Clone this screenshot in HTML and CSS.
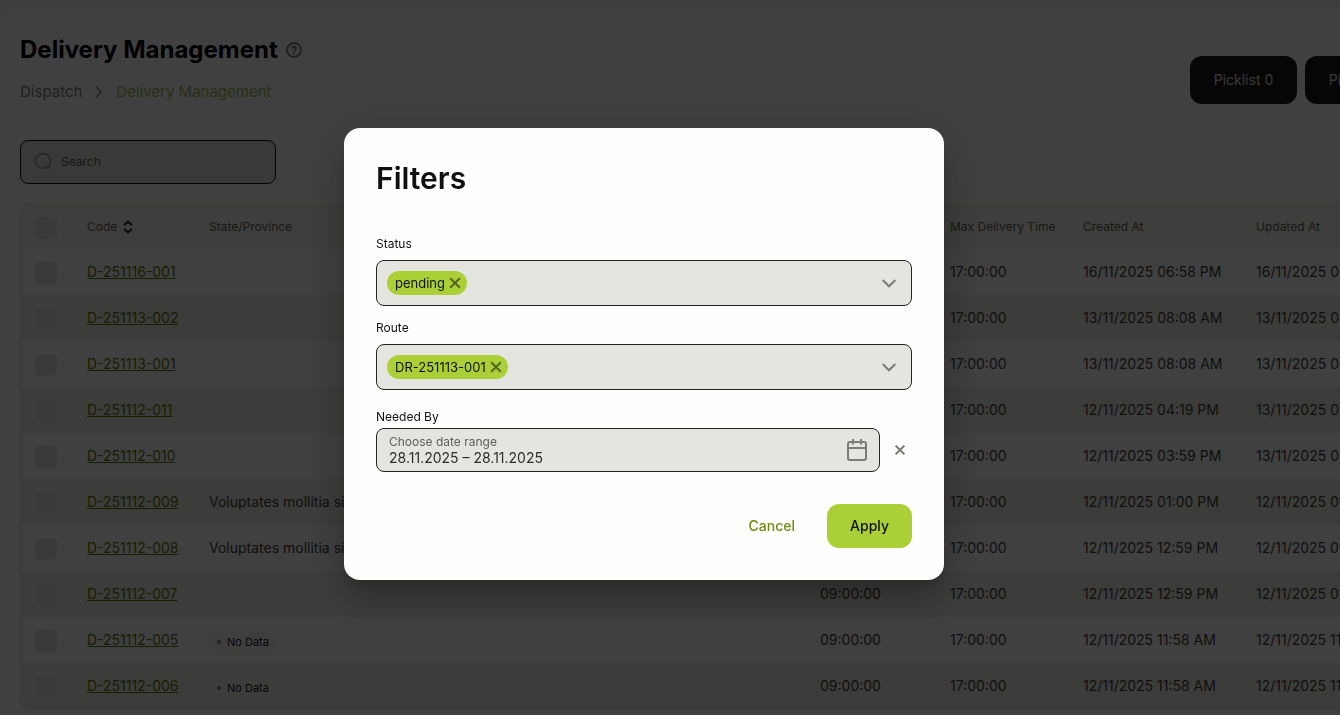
FILE: index.html
```
<!DOCTYPE html>
<html lang="en">
<head>
<meta charset="utf-8">
<title>Delivery Management</title>
<link rel="stylesheet" href="styles.css">
</head>
<body>
<main class="page">
  <header class="page-head">
    <div class="heading">
      <div class="title-row">
        <h1 class="title">Delivery Management</h1>
        <button class="icon-btn help" type="button" aria-label="Help">
          <svg width="16" height="16" viewBox="0 0 16 16" fill="none" stroke="currentColor" stroke-width="1.8"><circle cx="8" cy="8" r="7"/><path d="M6 6.600a2 2 0 1 1 2.900 1.700c-.6.300-.9.600-.9 1.200" /><path d="M8 10.600v1.600"/></svg>
        </button>
      </div>
      <nav class="crumbs" aria-label="Breadcrumb">
        <a class="crumb" href="#">Dispatch</a>
        <svg class="crumb-sep" width="8" height="12" viewBox="0 0 8 12" fill="none" stroke="currentColor" stroke-width="1.6"><path d="M1.200 1l5 5-5 5"/></svg>
        <a class="crumb crumb-current" href="#">Delivery Management</a>
      </nav>
    </div>
    <div class="actions">
      <button class="dark-btn" type="button">Picklist 0</button>
      <button class="dark-btn" type="button">Picklist 0</button>
    </div>
  </header>

  <div class="search">
    <svg width="18" height="18" viewBox="0 0 18 18" fill="none" stroke="currentColor" stroke-width="1.1"><circle cx="8" cy="8" r="7.400"/><path d="M14.200 14.200l1.600 1.600" stroke-width="1.400"/></svg>
    <input class="search-input" type="text" placeholder="Search" aria-label="Search">
  </div>

  <div class="table-wrap">
    <table class="table">
      <colgroup><col class="c-check"><col class="c-code"><col class="c-state"><col class="c-min"><col class="c-max"><col class="c-date"><col class="c-date"></colgroup>
      <thead>
        <tr>
          <th><input class="check" type="checkbox" aria-label="Select all"></th>
          <th><span class="sort">Code <svg width="10" height="14" viewBox="0 0 10 14" fill="none" stroke="currentColor" stroke-width="2"><path d="M1.200 5L5 1.600 8.800 5M1.200 9L5 12.400 8.800 9"/></svg></span></th>
          <th>State/Province</th><th></th><th>Max Delivery Time</th><th>Created At</th><th>Updated At</th>
        </tr>
      </thead>
      <tbody>
        <tr><td><input class="check" type="checkbox" aria-label="Select D-251116-001"></td><td><a class="code" href="#">D-251116-001</a></td><td></td><td></td><td>17:00:00</td><td>16/11/2025 06:58 PM</td><td>16/11/2025 06:58 PM</td></tr>
        <tr><td><input class="check" type="checkbox" aria-label="Select D-251113-002"></td><td><a class="code" href="#">D-251113-002</a></td><td></td><td></td><td>17:00:00</td><td>13/11/2025 08:08 AM</td><td>13/11/2025 08:08 AM</td></tr>
        <tr><td><input class="check" type="checkbox" aria-label="Select D-251113-001"></td><td><a class="code" href="#">D-251113-001</a></td><td></td><td></td><td>17:00:00</td><td>13/11/2025 08:08 AM</td><td>13/11/2025 08:08 AM</td></tr>
        <tr><td><input class="check" type="checkbox" aria-label="Select D-251112-011"></td><td><a class="code" href="#">D-251112-011</a></td><td></td><td></td><td>17:00:00</td><td>12/11/2025 04:19 PM</td><td>13/11/2025 08:08 AM</td></tr>
        <tr><td><input class="check" type="checkbox" aria-label="Select D-251112-010"></td><td><a class="code" href="#">D-251112-010</a></td><td></td><td></td><td>17:00:00</td><td>12/11/2025 03:59 PM</td><td>13/11/2025 08:08 AM</td></tr>
        <tr><td><input class="check" type="checkbox" aria-label="Select D-251112-009"></td><td><a class="code" href="#">D-251112-009</a></td><td>Voluptates mollitia sint</td><td></td><td>17:00:00</td><td>12/11/2025 01:00 PM</td><td>12/11/2025 01:00 PM</td></tr>
        <tr><td><input class="check" type="checkbox" aria-label="Select D-251112-008"></td><td><a class="code" href="#">D-251112-008</a></td><td>Voluptates mollitia sint</td><td></td><td>17:00:00</td><td>12/11/2025 12:59 PM</td><td>12/11/2025 01:00 PM</td></tr>
        <tr><td><input class="check" type="checkbox" aria-label="Select D-251112-007"></td><td><a class="code" href="#">D-251112-007</a></td><td></td><td>09:00:00</td><td>17:00:00</td><td>12/11/2025 12:59 PM</td><td>12/11/2025 01:00 PM</td></tr>
        <tr><td><input class="check" type="checkbox" aria-label="Select D-251112-005"></td><td><a class="code" href="#">D-251112-005</a></td><td><span class="badge">No Data</span></td><td>09:00:00</td><td>17:00:00</td><td>12/11/2025 11:58 AM</td><td>12/11/2025 11:58 AM</td></tr>
        <tr><td><input class="check" type="checkbox" aria-label="Select D-251112-006"></td><td><a class="code" href="#">D-251112-006</a></td><td><span class="badge">No Data</span></td><td>09:00:00</td><td>17:00:00</td><td>12/11/2025 11:58 AM</td><td>12/11/2025 11:58 AM</td></tr>
      </tbody>
    </table>
  </div>
</main>

<div class="overlay">
  <dialog class="modal" open aria-labelledby="filters-title">
    <h2 class="modal-title" id="filters-title">Filters</h2>
    <form class="form">
      <div class="field">
        <label class="label" for="status">Status</label>
        <div class="combo">
          <span class="chip">pending<button class="icon-btn chip-x" type="button" aria-label="Remove pending"><svg width="12" height="12" viewBox="0 0 12 12" fill="none" stroke="currentColor" stroke-width="2"><path d="M1.200 1.200l9.600 9.600M10.800 1.200l-9.600 9.600"/></svg></button></span>
          <input class="combo-input" id="status" type="text" role="combobox" aria-expanded="false">
          <button class="icon-btn" type="button" aria-label="Open status list"><svg width="14" height="9" viewBox="0 0 14 9" fill="none" stroke="currentColor" stroke-width="2"><path d="M.7 1L7 7.300 13.300 1"/></svg></button>
        </div>
      </div>
      <div class="field">
        <label class="label" for="route">Route</label>
        <div class="combo">
          <span class="chip">DR-251113-001<button class="icon-btn chip-x" type="button" aria-label="Remove DR-251113-001"><svg width="12" height="12" viewBox="0 0 12 12" fill="none" stroke="currentColor" stroke-width="2"><path d="M1.200 1.200l9.600 9.600M10.800 1.200l-9.600 9.600"/></svg></button></span>
          <input class="combo-input" id="route" type="text" role="combobox" aria-expanded="false">
          <button class="icon-btn" type="button" aria-label="Open route list"><svg width="14" height="9" viewBox="0 0 14 9" fill="none" stroke="currentColor" stroke-width="2"><path d="M.7 1L7 7.300 13.300 1"/></svg></button>
        </div>
      </div>
      <div class="field field-date">
        <span class="label">Needed By</span>
        <div class="date-row">
          <div class="date">
            <div class="date-text">
              <label class="date-label" for="needed">Choose date range</label>
              <input class="date-input" id="needed" type="text" value="28.11.2025 – 28.11.2025">
            </div>
            <button class="icon-btn" type="button" aria-label="Open calendar"><svg width="20" height="22" viewBox="0 0 20 22" fill="none" stroke="currentColor" stroke-width="2"><rect x="1" y="3" width="18" height="18" rx="2"/><path d="M1 9h18M6 0v5.500M14 0v5.500"/></svg></button>
          </div>
          <button class="icon-btn clear" type="button" aria-label="Clear dates"><svg width="10" height="10" viewBox="0 0 10 10" fill="none" stroke="currentColor" stroke-width="2"><path d="M.6.600l8.800 8.800M9.400.600L.6 9.400"/></svg></button>
        </div>
      </div>
      <div class="buttons">
        <button class="btn btn-text" type="button">Cancel</button>
        <button class="btn btn-main" type="button">Apply</button>
      </div>
    </form>
  </dialog>
</div>
</body>
</html>
```
FILE: styles.css
```
* { box-sizing: border-box; }

body {
  margin: 0;
  min-height: 100vh;
  padding-top: 10px;
  overflow: hidden;
  background: #f6f6ef;
  color: #40403c;
  font: 14px/20px Inter, "Liberation Sans", sans-serif;
}

button, input { font: inherit; color: inherit; }

.icon-btn {
  display: flex;
  padding: 0;
  border: 0;
  background: none;
  color: #7b7c77;
}

.page {
  min-height: calc(100vh - 10px);
  padding: 24px 20px 6px;
  overflow: hidden;
  border-radius: 12px 0 0 0;
  background: #fff;
}

.page-head {
  display: flex;
  justify-content: space-between;
  align-items: center;
  height: 92px;
}
.heading { display: flex; flex-direction: column; gap: 16px; padding-bottom: 24px; }
.title-row { display: flex; align-items: center; gap: 8px; }
.title { margin: 0; font-size: 24px; line-height: 32px; font-weight: 700; color: #000; }
.crumbs { display: flex; align-items: center; gap: 13px; font-size: 15px; line-height: 20px; }
.crumb { color: #80807a; text-decoration: none; }
.crumb-sep { color: #80807a; }
.crumb-current { color: #a0bd50; }

/* The second action runs past the right edge of the page. */
.actions { display: flex; flex: none; gap: 8px; margin-right: -92px; }
.dark-btn {
  width: 107px;
  height: 48px;
  border: 0;
  border-radius: 12px;
  background: #1a1a1a;
  color: #e0e0dc;
}

.search {
  display: flex;
  align-items: center;
  gap: 8px;
  width: 256px;
  height: 44px;
  margin: 14px 0 20px;
  padding: 0 14px;
  border: 1px solid #111;
  border-radius: 8px;
  background: #e4e4de;
  color: #80807a;
}
.search-input {
  flex: 1;
  min-width: 0;
  border: 0;
  padding: 0;
  outline: 0;
  background: none;
  font-size: 12px;
}
.search-input::placeholder { color: #60605c; opacity: 1; }

.table-wrap {
  width: 1395px;
  overflow: hidden;
  border: 1px solid #e4e4de;
  border-radius: 8px;
}
.table { width: 100%; border-collapse: collapse; table-layout: fixed; }
.c-check { width: 52px; }
.c-code { width: 122px; }
.c-state { width: 611px; }
.c-min { width: 130px; }
.c-max { width: 133px; }
.c-date { width: 173px; }
.table th, .table td { padding: 0 0 0 14px; text-align: left; white-space: nowrap; }
.table th { height: 44px; background: #f6f6ef; font-size: 12px; font-weight: 400; color: #60605c; }
.table td { height: 46px; }
.table tbody tr:nth-child(even) { background: #f0f0e8; }
.sort { display: flex; align-items: center; gap: 6px; }
.sort svg { color: #222; }
.code { color: #607800; }
.check {
  display: block;
  appearance: none;
  width: 22px;
  height: 22px;
  margin: 1px 0 0;
  border-radius: 5px;
  background: #e4e4de;
}
.table th .check, .table tr:nth-child(even) .check { background: #e8e8e2; }
.badge {
  display: inline-flex;
  align-items: center;
  gap: 6px;
  height: 20px;
  padding: 0 8px;
  border-radius: 10px;
  background: #f8f8f4;
  font-size: 11px;
  color: #111;
}
.badge::before { content: ""; width: 4px; height: 4px; border-radius: 50%; background: #80807a; }
.table tr:nth-child(even) .badge { background: #f3f3ec; }

.overlay {
  position: fixed;
  inset: 0;
  display: flex;
  align-items: center;
  justify-content: center;
  padding: 0 52px 7px 0;
  background: rgba(0, 0, 0, 0.75);
}
.modal {
  position: static;
  width: 600px;
  margin: 0;
  padding: 32px;
  border: 0;
  border-radius: 16px;
  background: #fefefe;
  color: #111;
  box-shadow: 0 11px 15px -7px rgba(0, 0, 0, 0.2), 0 24px 38px 3px rgba(0, 0, 0, 0.14), 0 9px 46px 8px rgba(0, 0, 0, 0.12);
}
.modal-title { margin: 0 0 40px; font-size: 30px; line-height: 36px; font-weight: 600; }
.form { display: flex; flex-direction: column; }
.field { display: flex; flex-direction: column; gap: 8px; margin-bottom: 14px; }
.label { font-size: 12px; line-height: 16px; }
.combo {
  display: flex;
  align-items: center;
  height: 46px;
  padding: 0 15px 0 10px;
  border: 1px solid #222;
  border-radius: 8px;
  background: #e4e5df;
}
.combo-input { flex: 1; min-width: 0; border: 0; outline: 0; background: none; }
.chip {
  display: flex;
  align-items: center;
  gap: 4px;
  height: 24px;
  padding: 0 6px 0 8px;
  border-radius: 12px;
  background: #abd037;
  font-size: 13px;
}
.chip-x { color: #566625; }
.field-date { gap: 3px; margin: 5px 0 32px; }
.date-row { display: flex; align-items: center; gap: 15px; padding-right: 7px; }
.date {
  display: flex;
  flex: 1;
  align-items: center;
  height: 44px;
  padding: 0 12px;
  border: 1px solid #222;
  border-radius: 8px;
  background: #e4e5df;
}
.date-text { display: flex; flex: 1; flex-direction: column; }
.date-label { font-size: 12px; line-height: 16px; color: #60605c; }
.date-input { height: 16px; padding: 0; border: 0; outline: 0; background: none; color: #2d2d2b; line-height: 16px; }
.buttons { display: flex; justify-content: flex-end; gap: 9px; }
.btn { height: 44px; padding: 0 23px; border: 0; border-radius: 12px; font-weight: 500; }
.btn-text { background: none; color: #6d8c0c; }
.btn-main { background: #abd037; color: #111; }
```
